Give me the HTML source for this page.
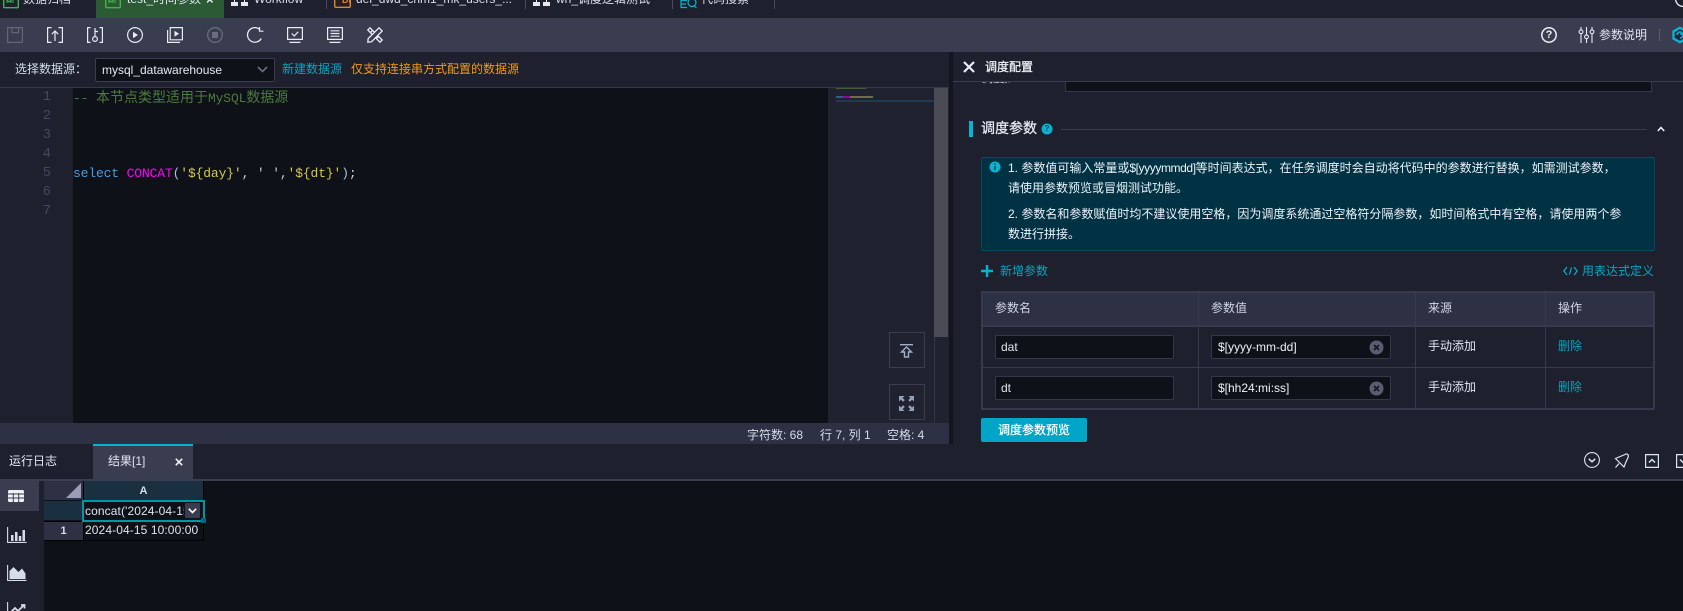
<!DOCTYPE html>
<html><head><meta charset="utf-8"><style>
*{box-sizing:border-box}
html,body{margin:0;padding:0;width:1683px;height:611px;overflow:hidden;background:#1e202d}
body{position:relative;font:12px/20px "Liberation Sans","Noto Sans CJK SC",sans-serif;color:#dfe5f0}
.a{position:absolute}
.t{position:absolute;white-space:nowrap;line-height:20px;font-size:12px}
svg{position:absolute;overflow:visible;fill:none}
.ln{position:absolute;left:0;width:51px;text-align:right;font:14px/19px "Liberation Mono",monospace;color:#454860}
.cd{position:absolute;left:73px;white-space:pre;font:13px/19px "Liberation Mono","Noto Sans CJK SC",monospace;letter-spacing:-.14px}
.cd i{font:14px/19px "Noto Sans CJK SC",sans-serif;letter-spacing:0}
.inp{position:absolute;background:#0f1119;border:1px solid #34374b;border-radius:2px;height:24px}
.lk{color:#00a9c4}
.s{-webkit-text-stroke:.25px currentColor}
</style></head><body>

<!-- top tabs -->
<div class="a" style="left:0;top:0;width:1683px;height:18px;background:#1e202d"></div>
<div class="a" style="left:96px;top:0;width:128px;height:18px;background:#2b5a34"></div>
<svg style="left:3px;top:-8px" width="16" height="16"><rect x=".7" y=".7" width="14.6" height="15" rx="1" stroke="#3cb54a" stroke-width="1.4"/><path d="M4 11V8l2 2 2-2v3M10 8v3" stroke="#3cb54a"/></svg>
<div class="t" style="left:23px;top:-11px;color:#d8dde8">数据归档</div>
<svg style="left:105px;top:-8px" width="16" height="16"><rect x=".7" y=".7" width="14.6" height="15" rx="1" stroke="#3cb54a" stroke-width="1.4"/><path d="M4 11V8l2 2 2-2v3M10 8v3" stroke="#3cb54a"/></svg>
<div class="t" style="left:127px;top:-11px;color:#dfe5f0">test_时间参数</div>
<div class="t" style="left:206px;top:-10px;font-size:13px;color:#e8edf5;font-weight:bold">×</div>
<svg style="left:231px;top:0" width="17" height="6"><path d="M0 2h7v4H0zM10 2h7v4h-7z" fill="#e6e8ee"/><path d="M3 0h1v2H3zM13 0h1v2h-1z" fill="#e6e8ee"/></svg>
<div class="t" style="left:254px;top:-11px;color:#d8dde8">Workflow</div>
<div class="a" style="left:326px;top:0;width:1px;height:9px;background:#4a4c5e"></div>
<svg style="left:334px;top:-8px" width="17" height="16"><rect x=".7" y=".7" width="15.6" height="14.6" rx="1" stroke="#e8851c" stroke-width="1.4"/></svg>
<div class="t" style="left:342px;top:-5px;font-size:9px;color:#e8851c;line-height:10px;font-weight:bold">DI</div>
<div class="t" style="left:356px;top:-11px;color:#d8dde8">dei_dwd_chm1_mk_users_...</div>
<div class="a" style="left:525px;top:0;width:1px;height:9px;background:#4a4c5e"></div>
<svg style="left:533px;top:0" width="17" height="6"><path d="M0 2h7v4H0zM10 2h7v4h-7z" fill="#e6e8ee"/><path d="M3 0h1v2H3zM13 0h1v2h-1z" fill="#e6e8ee"/></svg>
<div class="t" style="left:556px;top:-11px;color:#d8dde8">wh_调度逻辑测试</div>
<div class="a" style="left:672px;top:0;width:1px;height:9px;background:#4a4c5e"></div>
<svg style="left:680px;top:0" width="17" height="9"><path d="M7 0.5H1V7.5H7M1 4H6" stroke="#09b3cf" stroke-width="1.2"/><circle cx="12" cy="2.5" r="4" stroke="#09b3cf" stroke-width="1.2"/><path d="M14 5.5l2.5 2.5" stroke="#09b3cf" stroke-width="1.2"/></svg>
<div class="t" style="left:701px;top:-11px;color:#d8dde8">代码搜索</div>
<div class="a" style="left:774px;top:0;width:1px;height:9px;background:#4a4c5e"></div>
<svg style="left:1675px;top:-9px" width="16" height="16"><circle cx="8" cy="8" r="7.4" stroke="#e8edf5" stroke-width="1.3"/></svg>

<!-- toolbar -->
<div class="a" style="left:0;top:18px;width:1683px;height:34px;background:#3a3c50"></div>
<svg style="left:7px;top:27px" width="16" height="16" stroke="#63657a" stroke-width="1.2"><path d="M.6.6h14.8v14.8H.6zM5 .6v5h6.5v-5"/></svg>
<svg style="left:47px;top:27px" width="16" height="16" stroke="#e8ecf5" stroke-width="1.2"><path d="M4.5.6H.6v14.8h3.9M11.5.6h3.9v14.8h-3.9M8 14V4M4.8 7.2 8 4l3.2 3.2"/></svg>
<svg style="left:87px;top:27px" width="16" height="16" stroke="#e8ecf5" stroke-width="1.2"><path d="M3.5.6H.6v14.8h2.9M12.5.6h2.9v14.8h-2.9M8 1v8.5M8 4.5h3"/><circle cx="8" cy="12" r="2.4"/></svg>
<svg style="left:127px;top:27px" width="16" height="16" stroke="#e8ecf5" stroke-width="1.2"><circle cx="8" cy="8" r="7.4"/><path d="M6 4.8v6.4L11 8z" fill="#e8ecf5" stroke="none"/></svg>
<svg style="left:167px;top:27px" width="16" height="16" stroke="#e8ecf5" stroke-width="1.2"><path d="M3.2.6h12.2v12.2H3.2zM.6 3v12.4h12.4"/><path d="M7.5 3.8v6l4.5-3z" fill="#e8ecf5" stroke="none"/></svg>
<svg style="left:207px;top:27px" width="16" height="16" stroke="#6a6c80" stroke-width="1.3"><circle cx="8" cy="8" r="7.3"/><rect x="5" y="5" width="6" height="6" fill="#6a6c80" stroke="none"/></svg>
<svg style="left:247px;top:27px" width="16" height="16" stroke="#e8ecf5" stroke-width="1.3"><path d="M14.2 11.5A7.3 7.3 0 1 1 12.8 2.6"/><path d="M12.5 0v4.2H16.5" stroke-width="1.2"/></svg>
<svg style="left:287px;top:27px" width="16" height="16" stroke="#e8ecf5" stroke-width="1.2"><path d="M.6.6h14.8v11.8H.6zM2.5 15.400h11M4.800 6.500 7.200 9l4-4.200"/></svg>
<svg style="left:327px;top:27px" width="16" height="16" stroke="#e8ecf5" stroke-width="1.2"><path d="M.6.6h14.8v11.8H.6zM3.500 3.800h9M3.500 6.500h9M3.500 9.200h9M2.500 15.400h11"/></svg>
<svg style="left:367px;top:27px" width="16" height="16" stroke="#e8ecf5" stroke-width="1.3"><path d="M3 .8 15.200 13l-2.200 2.200L.8 3zM3.500 5.500l2-2M6.500 8.500l2-2M9.500 11.500l2-2"/><path d="M12 .8l3.200 3.200L4.500 14.800.8 15.200 1.200 11.500z" fill="#3a3c50"/></svg>
<svg style="left:1541px;top:27px" width="16" height="16" stroke="#e8ecf5" stroke-width="1.5"><circle cx="8" cy="8" r="7.2"/></svg>
<div class="t" style="left:1541px;top:25px;width:16px;text-align:center;font-weight:bold;font-size:11px;color:#e8ecf5">?</div>
<svg style="left:1579px;top:27px" width="15" height="16" stroke="#e8ecf5" stroke-width="1.1"><path d="M2 0v2.500M2 7v9M7.500 0v7.500M7.500 12v4M13 0v2.500M13 7v9"/><circle cx="2" cy="4.800" r="1.900"/><circle cx="7.500" cy="9.800" r="1.900"/><circle cx="13" cy="4.800" r="1.900"/></svg>
<div class="t" style="left:1599px;top:25px;color:#e0e5ef">参数说明</div>
<div class="a" style="left:1659px;top:29px;width:1px;height:12px;background:#5a5c70"></div>
<svg style="left:1672px;top:27px" width="16" height="16"><path d="M8 .8 14.500 4.400v7.200L8 15.200 1.500 11.600V4.400z" fill="#22283c" stroke="#09b3cf" stroke-width="2.400"/><path d="M5 8a3 3 0 1 1 3 3M8 7l5 0" stroke="#09b3cf" stroke-width="1.600"/></svg>

<!-- datasource bar -->
<div class="t" style="left:15px;top:59px;color:#d5dcea">选择数据源：</div>
<div class="a" style="left:95px;top:58px;width:180px;height:24px;background:#0f1119;border:1px solid #3a3c50;border-radius:2px"></div>
<div class="t" style="left:102px;top:60px;color:#e4e8f0">mysql_datawarehouse</div>
<svg style="left:257px;top:66px" width="11" height="7" stroke="#6a6e88" stroke-width="1.600"><path d="M1 1l4.500 4.500L10 1"/></svg>
<div class="t lk" style="left:282px;top:59px">新建数据源</div>
<div class="t" style="left:351px;top:59px;color:#f59a12">仅支持连接串方式配置的数据源</div>

<!-- editor -->
<div class="a" style="left:0;top:87px;width:949px;height:1px;background:#34364a"></div>
<div class="a" style="left:0;top:88px;width:73px;height:335px;background:#1e202d"></div>
<div class="a" style="left:73px;top:88px;width:755px;height:335px;background:#0f1119"></div>
<div class="a" style="left:828px;top:88px;width:121px;height:335px;background:#20222f"></div>
<div class="ln" style="top:88px">1</div><div class="ln" style="top:107px">2</div><div class="ln" style="top:126px">3</div><div class="ln" style="top:145px">4</div><div class="ln" style="top:164px">5</div><div class="ln" style="top:183px">6</div><div class="ln" style="top:202px">7</div>
<div class="cd" style="top:88px;color:#4d7a3e">-- <i>本节点类型适用于</i>MySQL<i>数据源</i></div>
<div class="cd" style="top:164px;color:#c8ccd6"><span style="color:#4a9ce0">select</span> <span style="color:#f0f">CONCAT</span><span style="color:#a7c0d8">(</span><span style="color:#d3c94e">'${day}'</span>, ' ',<span style="color:#d3c94e">'${dt}'</span><span style="color:#a7c0d8">)</span>;</div>

<div class="a" style="left:836px;top:88px;width:30px;height:1px;background:#3f5f38"></div>
<div class="a" style="left:836px;top:96px;width:7px;height:2px;background:#2f5f88"></div>
<div class="a" style="left:843px;top:96px;width:7px;height:2px;background:#9a009a"></div>
<div class="a" style="left:850px;top:96px;width:23px;height:2px;background:#6e6e4a"></div>
<div class="a" style="left:836px;top:100px;width:98px;height:2px;background:#1f3a55"></div>
<div class="a" style="left:934px;top:88px;width:14px;height:249px;background:#4a4b55"></div>
<div class="a" style="left:934px;top:337px;width:1px;height:86px;background:#34364a"></div>
<div class="a" style="left:889px;top:332px;width:36px;height:36px;border:1px solid #3a3c50"></div>
<svg style="left:900px;top:344px" width="14" height="14" stroke="#9fb0c8" stroke-width="1.400"><path d="M0 .7h13M6.500 3 1.500 8H4.500v5h4V8h3z"/></svg>
<div class="a" style="left:889px;top:384px;width:36px;height:36px;border:1px solid #3a3c50"></div>
<svg style="left:899px;top:396px" width="15" height="15"><path d="M0 0h5.500L3.600 1.900 5.800 4.100 4.100 5.800 1.900 3.600 0 5.500zM15 0v5.500l-1.900-1.900-2.200 2.200-1.700-1.700 2.200-2.200L9.500 0zM0 15V9.500l1.900 1.900 2.200-2.200 1.700 1.700-2.200 2.200L5.500 15zM15 15H9.500l1.900-1.900-2.200-2.200 1.700-1.700 2.200 2.200L15 9.500z" fill="#8fa3bc"/></svg>

<!-- status bar -->
<div class="a" style="left:0;top:423px;width:949px;height:21px;background:#2e3043"></div>
<div class="t" style="left:747px;top:425px;color:#d5dcea">字符数: 68</div>
<div class="t" style="left:820px;top:425px;color:#d5dcea">行 7, 列 1</div>
<div class="t" style="left:887px;top:425px;color:#d5dcea">空格: 4</div>

<!-- splitter -->
<div class="a" style="left:949px;top:52px;width:4px;height:392px;background:#14151e"></div>

<!-- right panel header -->
<svg style="left:963px;top:61px" width="12" height="12" stroke="#e8eef6" stroke-width="2.200"><path d="M1 1l10 10M11 1 1 11"/></svg>
<div class="t s" style="left:985px;top:57px;color:#f0f3f8">调度配置</div>
<div class="a" style="left:953px;top:81px;width:730px;height:1px;background:#3a3c50"></div>
<div class="a" style="left:981px;top:82px;width:30px;height:2px;overflow:hidden"><div class="t" style="left:0;top:-14px;color:#dfe5f0">调度周期</div></div>
<div class="a" style="left:1065px;top:82px;width:587px;height:10px;background:#0f1119;border:1px solid #34374b;border-top:0"></div>

<!-- section -->
<div class="a" style="left:969px;top:121px;width:4px;height:16px;background:#09b3cf"></div>
<div class="t s" style="left:981px;top:118px;font-size:14px;color:#e8edf5">调度参数</div>
<svg style="left:1041px;top:123px" width="12" height="12"><circle cx="6" cy="6" r="5.500" fill="#09b3cf"/></svg>
<div class="t" style="left:1041px;top:119px;width:12px;text-align:center;font-size:8px;font-weight:bold;color:#0c3c4c">?</div>
<div class="a" style="left:1061px;top:129px;width:586px;height:1px;background:#3a3c50"></div>
<svg style="left:1657px;top:126px" width="8" height="6" stroke="#e8edf5" stroke-width="1.600"><path d="M.8 5 4 1.500 7.200 5"/></svg>

<!-- info box -->
<div class="a" style="left:981px;top:157px;width:674px;height:94px;background:#003244;border:1px solid #07485c;border-radius:2px"></div>
<svg style="left:989px;top:161px" width="12" height="12"><circle cx="6" cy="6" r="5.500" fill="#09b3cf"/><path d="M6 2.500v1.200M6 5v4" stroke="#00323f" stroke-width="1.300"/></svg>
<div class="t" style="left:1008px;top:158px;color:#eef2f7">1. 参数值可输入常量或<span style="letter-spacing:-.4px">$[yyyymmdd]</span>等时间表达式，在任务调度时会自动将代码中的参数进行替换，如需测试参数，</div>
<div class="t" style="left:1008px;top:178px;color:#eef2f7">请使用参数预览或冒烟测试功能。</div>
<div class="t" style="left:1008px;top:204px;color:#eef2f7">2. 参数名和参数赋值时均不建议使用空格，因为调度系统通过空格符分隔参数，如时间格式中有空格，请使用两个参</div>
<div class="t" style="left:1008px;top:224px;color:#eef2f7">数进行拼接。</div>

<svg style="left:981px;top:265px" width="12" height="12" stroke="#09b3cf" stroke-width="2.400"><path d="M6 0v12M0 6h12"/></svg>
<div class="t lk" style="left:1000px;top:261px">新增参数</div>
<svg style="left:1563px;top:266px" width="15" height="10" stroke="#09b3cf" stroke-width="1.200"><path d="M4 1 .8 5 4 9M11 1l3.200 4L11 9M8.500 1.500 6.500 8.500"/></svg>
<div class="t lk" style="left:1582px;top:261px">用表达式定义</div>

<!-- table -->
<div class="a" style="left:981px;top:291px;width:674px;height:119px;border:2px solid #373a4e"></div>
<div class="a" style="left:983px;top:293px;width:670px;height:32px;background:#2e3043"></div>
<div class="a" style="left:983px;top:325px;width:670px;height:2px;background:#373a4e"></div>
<div class="a" style="left:983px;top:367px;width:670px;height:1px;background:#373a4e"></div>
<div class="a" style="left:1198px;top:293px;width:1px;height:115px;background:#373a4e"></div>
<div class="a" style="left:1415px;top:293px;width:1px;height:115px;background:#373a4e"></div>
<div class="a" style="left:1545px;top:293px;width:1px;height:115px;background:#373a4e"></div>
<div class="t" style="left:995px;top:298px;color:#cfd7e6">参数名</div>
<div class="t" style="left:1211px;top:298px;color:#cfd7e6">参数值</div>
<div class="t" style="left:1428px;top:298px;color:#cfd7e6">来源</div>
<div class="t" style="left:1558px;top:298px;color:#cfd7e6">操作</div>

<div class="inp" style="left:995px;top:335px;width:179px"></div>
<div class="t" style="left:1001px;top:337px;color:#dfe5f0">dat</div>
<div class="inp" style="left:1211px;top:335px;width:180px"></div>
<div class="t" style="left:1218px;top:337px;color:#eef2f7">$[yyyy-mm-dd]</div>
<svg style="left:1369px;top:340px" width="15" height="15"><circle cx="7.500" cy="7.500" r="7" fill="#5a5c74"/><path d="M5 5l5 5M10 5l-5 5" stroke="#14151e" stroke-width="1.600"/></svg>
<div class="t" style="left:1428px;top:336px;color:#dfe5f0">手动添加</div>
<div class="t lk" style="left:1558px;top:336px;color:#00a5bf">删除</div>

<div class="inp" style="left:995px;top:376px;width:179px"></div>
<div class="t" style="left:1001px;top:378px;color:#dfe5f0">dt</div>
<div class="inp" style="left:1211px;top:376px;width:180px"></div>
<div class="t" style="left:1218px;top:378px;color:#eef2f7">$[hh24:mi:ss]</div>
<svg style="left:1369px;top:381px" width="15" height="15"><circle cx="7.500" cy="7.500" r="7" fill="#5a5c74"/><path d="M5 5l5 5M10 5l-5 5" stroke="#14151e" stroke-width="1.600"/></svg>
<div class="t" style="left:1428px;top:377px;color:#dfe5f0">手动添加</div>
<div class="t lk" style="left:1558px;top:377px;color:#00a5bf">删除</div>

<div class="a" style="left:981px;top:418px;width:106px;height:24px;background:#00a5c8;border-radius:2px"></div>
<div class="t s" style="left:981px;top:420px;width:106px;text-align:center;color:#fff">调度参数预览</div>

<!-- bottom tabs -->
<div class="a" style="left:0;top:444px;width:1683px;height:35px;background:#1e202d"></div>
<div class="a" style="left:0;top:479px;width:1683px;height:2px;background:#3a3c50"></div>
<div class="a" style="left:93px;top:444px;width:100px;height:35px;background:#3a3c50"></div>
<div class="a" style="left:93px;top:444px;width:100px;height:2px;background:#09b3cf"></div>
<div class="t" style="left:9px;top:451px;color:#e0e6f0">运行日志</div>
<div class="t" style="left:108px;top:451px;color:#e0e6f0">结果[1]</div>
<svg style="left:175px;top:458px" width="8" height="8" stroke="#eef2f7" stroke-width="1.600"><path d="M.8.800l6.400 6.400M7.200.800.800 7.200"/></svg>

<svg style="left:1584px;top:452px" width="16" height="16" stroke="#dbe5f2" stroke-width="1.100"><circle cx="8" cy="8" r="7.400"/><path d="M4.800 6.800 8 9.800l3.200-3" stroke-width="1.500"/></svg>
<svg style="left:1614px;top:453px" width="16" height="16" stroke="#dbe5f2" stroke-width="1.200"><path d="M1.500 5.500 5 4l6-2.500C13 0 15 2 14.200 4L11.500 10 10 14z"/><path d="M5 10.500 1.500 14.500"/></svg>
<svg style="left:1645px;top:454px" width="14" height="14" stroke="#dbe5f2" stroke-width="1.200"><path d="M.6.600h12.800v12.800H.6z"/><path d="M4 8.500 7 5.500l3 3" stroke-width="1.500"/></svg>
<svg style="left:1676px;top:454px" width="14" height="14" stroke="#dbe5f2" stroke-width="1.200"><path d="M.6.600h12.800v12.800H.6z"/><path d="M4 5.500 7 8.500l3-3" stroke-width="1.500"/></svg>

<!-- bottom content -->
<div class="a" style="left:0;top:481px;width:1683px;height:130px;background:#0f1119"></div>
<div class="a" style="left:0;top:481px;width:44px;height:130px;background:#1e202d"></div>
<div class="a" style="left:0;top:481px;width:39px;height:30px;background:#3a3c50"></div>
<svg style="left:8px;top:490px" width="16" height="12"><path d="M0 1.500a1.500 1.500 0 0 1 1.500-1.500h13a1.500 1.500 0 0 1 1.500 1.500v9a1.500 1.500 0 0 1-1.500 1.500h-13a1.500 1.500 0 0 1-1.500-1.500z" fill="#eef2f7"/><path d="M0 4h16M0 8h16M5.300 3v9M10.700 3v9" stroke="#3a3c50"/></svg>
<svg style="left:7px;top:527px" width="20" height="16"><path d="M.6 0v15.400H19.500" stroke="#d5dcea" stroke-width="1.100"/><path d="M4 8h2.500v6H4zM8 5h2.500v9H8zM11.800 9h2.500v5h-2.500zM15.500 3h2.500v11h-2.500z" fill="#d5dcea"/></svg>
<svg style="left:7px;top:565px" width="20" height="16"><path d="M.6 0v15.400H19.500" stroke="#d5dcea" stroke-width="1.100"/><path d="M2.500 14V6l4-4 5 5 3.500-3.500 3.500 5V14z" fill="#d5dcea"/></svg>
<svg style="left:7px;top:602px" width="20" height="16"><path d="M.6 0v15.400H19.500" stroke="#d5dcea" stroke-width="1.100"/><path d="M3 11 8 6l3 3 6-6M14 3h3.500v3.500" stroke="#d5dcea" stroke-width="1.800"/></svg>

<!-- grid -->
<div class="a" style="left:44px;top:481px;width:39px;height:19px;background:#2e3043"></div>
<svg style="left:66px;top:483px" width="16" height="15"><path d="M15 0v15H0z" fill="#9a9cb8"/></svg>
<div class="a" style="left:84px;top:481px;width:119px;height:19px;background:#1a3040"></div>
<div class="t" style="left:84px;top:481px;width:119px;text-align:center;font-weight:bold;font-size:11px;color:#d5dcea;line-height:20px">A</div>
<div class="a" style="left:44px;top:501px;width:39px;height:19px;background:#1a3040"></div>
<div class="a" style="left:44px;top:522px;width:39px;height:18px;background:#2e3043"></div>
<div class="t" style="left:44px;top:521px;width:39px;text-align:center;font-weight:bold;font-size:11px;color:#d5dcea">1</div>
<div class="a" style="left:83px;top:481px;width:1px;height:60px;background:#000"></div>
<div class="a" style="left:203px;top:481px;width:1px;height:60px;background:#000"></div>
<div class="a" style="left:44px;top:521px;width:160px;height:1px;background:#000"></div>
<div class="a" style="left:44px;top:540px;width:160px;height:1px;background:#000"></div>
<div class="a" style="left:82px;top:500px;width:123px;height:22px;border:2px solid #0097a7"></div>
<div class="a" style="left:85px;top:502px;width:99px;height:18px;overflow:hidden"><div class="t" style="left:0;top:-1px;color:#dfe3ee;letter-spacing:.1px">concat('2024-04-15',' ','10:00:00')</div></div>
<div class="a" style="left:185px;top:503px;width:15px;height:15px;background:#3a3c50;border-radius:1px"></div>
<svg style="left:188px;top:508px" width="9" height="6" stroke="#fff" stroke-width="1.600"><path d="M.8.800 4.500 4.500 8.200.800"/></svg>
<div class="a" style="left:201px;top:518px;width:5px;height:5px;background:#00687a"></div>
<div class="t" style="left:85px;top:520px;color:#dfe3ee;letter-spacing:.1px">2024-04-15 10:00:00</div>

</body></html>
